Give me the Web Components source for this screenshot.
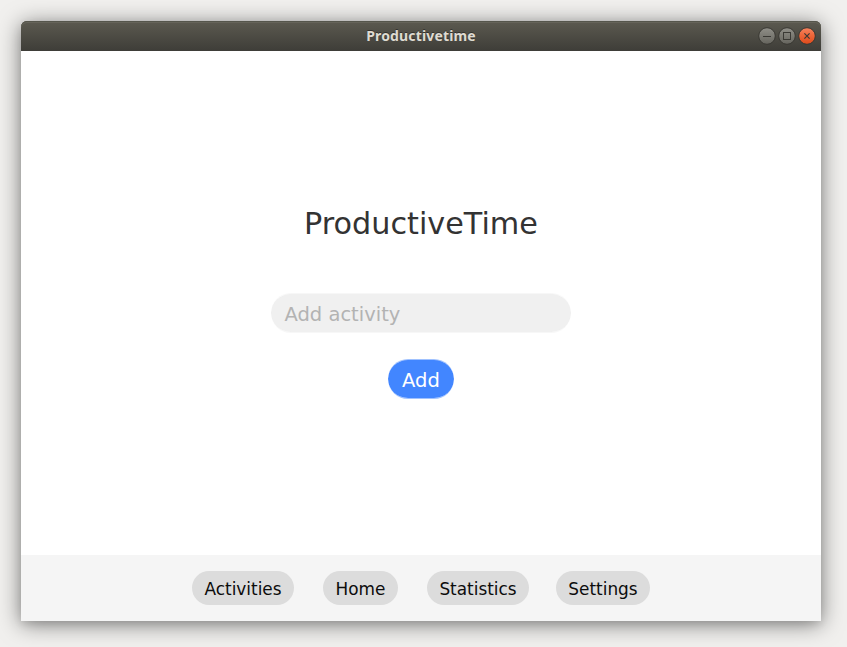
<!DOCTYPE html>
<html lang="en">
<head>
<meta charset="utf-8">
<title>Productivetime</title>
<style>
html, body { margin: 0; height: 100%; }
body { background: #f1f0ee; font-family: "DejaVu Sans", sans-serif; overflow: hidden; padding: 21px 26px 26px 21px; box-sizing: border-box; }
</style>
</head>
<body>
<app-window heading="Productivetime">
  <activity-form></activity-form>
  <nav-bar slot="footer">
    <pill-button style="width:102px">Activities</pill-button>
    <pill-button style="width:75px;margin-left:29px">Home</pill-button>
    <pill-button style="width:102px;margin-left:29px">Statistics</pill-button>
    <pill-button style="width:94px;margin-left:27px">Settings</pill-button>
  </nav-bar>
</app-window>
<script>
class Base extends HTMLElement {
  connectedCallback() {
    if (!this.shadowRoot) this.attachShadow({ mode: 'open' }).innerHTML = this.render();
  }
}
customElements.define('window-control', class extends Base {
  render() {
    const glyphs = {
      minimize: '<path d="M5 9.5h8"/>',
      maximize: '<rect x="5.5" y="5.5" width="7" height="7"/>',
      close: '<path d="M6.4 6.4l5.2 5.2M11.6 6.4l-5.2 5.2" stroke-width="1.2"/>'
    };
    const kind = this.getAttribute('kind');
    const hot = kind === 'close';
    return `<style>:host{display:block;width:18px;height:18px}svg{display:block}</style>
    <svg width="18" height="18" viewBox="0 0 18 18" fill="none" stroke="#3a3934">
      <defs><linearGradient id="g" x1="0" y1="0" x2="0" y2="1">
        <stop offset="0" stop-color="${hot ? '#f5845f' : '#8f8e87'}"/>
        <stop offset=".5" stop-color="${hot ? '#ee6437' : '#7b7a73'}"/>
        <stop offset="1" stop-color="${hot ? '#dc4a1b' : '#65645d'}"/>
      </linearGradient></defs>
      <circle cx="9" cy="9" r="8.3" fill="url(#g)" stroke="#393833" stroke-width="1"/>
      ${glyphs[kind]}
    </svg>`;
  }
});
customElements.define('title-bar', class extends Base {
  render() {
    return `<style>
      :host{display:grid;grid-template-columns:1fr auto 1fr;align-items:center;height:30px;box-sizing:border-box;
        border-radius:6px 6px 0 0;background:linear-gradient(#5c5a50,#3e3d38);box-shadow:inset 0 1px #56564c,inset 0 2px #66645a}
      .text{grid-column:2;font:bold 14px "Noto Sans","Open Sans",sans-serif;letter-spacing:.15px;color:#dfdbd2;text-shadow:0 -1px #33322e;white-space:nowrap;padding-bottom:2px}
      .controls{display:flex;gap:2px;justify-content:flex-end;padding-right:5px}
    </style>
    <div class="text"><slot></slot></div>
    <div class="controls"><window-control kind="minimize"></window-control><window-control kind="maximize"></window-control><window-control kind="close"></window-control></div>`;
  }
});
customElements.define('app-window', class extends Base {
  render() {
    return `<style>
      :host{display:flex;flex-direction:column;width:800px;height:600px;border-radius:6px 6px 0 0;
        box-shadow:0 3px 22px rgba(0,0,0,.5),0 3px 8px rgba(0,0,0,.08)}
      main{flex:1;background:#fff}
    </style>
    <title-bar>${this.getAttribute('heading')}</title-bar>
    <main><slot></slot></main>
    <slot name="footer"></slot>`;
  }
});
customElements.define('activity-form', class extends Base {
  render() {
    return `<style>
      :host{display:flex;flex-direction:column;align-items:center;padding-top:155px}
      h1{margin:0;font-weight:400;font-size:30.25px;line-height:36px;color:#333}
      .pill{box-sizing:border-box;height:40px;border-block:1px solid;border-radius:20px;background-clip:padding-box;font-size:19.5px;line-height:38px;padding-top:2px}
      .field{width:300px;margin-top:51px;padding-inline:13.5px;background-color:#f0f0f0;border-color:#efefef80}
      .field span{color:#b3b3b3}
      .add{width:66px;margin-top:26px;background-color:#4286ff;border-color:#4286ff80;color:#fff;text-align:center}
    </style>
    <h1>ProductiveTime</h1>
    <div class="pill field"><span>Add activity</span></div>
    <div class="pill add" role="button">Add</div>`;
  }
});
customElements.define('nav-bar', class extends Base {
  render() {
    return `<style>:host{display:flex;justify-content:center;align-items:center;height:66px;background:#f5f5f5}</style><slot></slot>`;
  }
});
customElements.define('pill-button', class extends Base {
  render() {
    return `<style>:host{display:block;box-sizing:border-box;height:34px;padding-top:1px;border-radius:17px;background:#dcdcdc;color:#0c0c0c;font-size:16.9px;line-height:34px;text-align:center;white-space:nowrap}</style><slot></slot>`;
  }
});
</script>
</body>
</html>
